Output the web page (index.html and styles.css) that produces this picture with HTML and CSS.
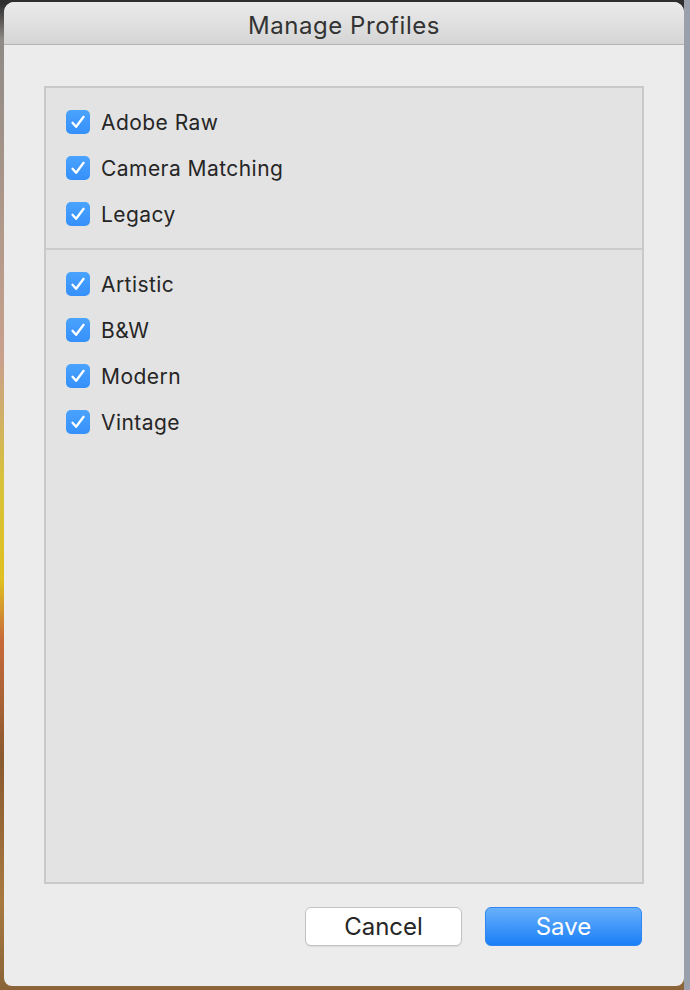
FILE: index.html
```html
<!DOCTYPE html>
<html>
<head>
<meta charset="utf-8">
<title>Manage Profiles</title>
<link rel="stylesheet" href="styles.css">
</head>
<body>
<div class="window">
  <div class="titlebar">Manage Profiles</div>
  <div class="content">
    <div class="panel">
      <div class="section">
        <label class="row"><span class="check"><svg viewBox="0 0 24 24"><path d="M6.5 12.8l3.6 4L17.6 6.8"/></svg></span><span class="label">Adobe Raw</span></label>
        <label class="row"><span class="check"><svg viewBox="0 0 24 24"><path d="M6.5 12.8l3.6 4L17.6 6.8"/></svg></span><span class="label">Camera Matching</span></label>
        <label class="row"><span class="check"><svg viewBox="0 0 24 24"><path d="M6.5 12.8l3.6 4L17.6 6.8"/></svg></span><span class="label">Legacy</span></label>
      </div>
      <div class="divider"></div>
      <div class="section">
        <label class="row"><span class="check"><svg viewBox="0 0 24 24"><path d="M6.5 12.8l3.6 4L17.6 6.8"/></svg></span><span class="label">Artistic</span></label>
        <label class="row"><span class="check"><svg viewBox="0 0 24 24"><path d="M6.5 12.8l3.6 4L17.6 6.8"/></svg></span><span class="label">B&amp;W</span></label>
        <label class="row"><span class="check"><svg viewBox="0 0 24 24"><path d="M6.5 12.8l3.6 4L17.6 6.8"/></svg></span><span class="label">Modern</span></label>
        <label class="row"><span class="check"><svg viewBox="0 0 24 24"><path d="M6.5 12.8l3.6 4L17.6 6.8"/></svg></span><span class="label">Vintage</span></label>
      </div>
    </div>
    <div class="buttons">
      <button class="btn btn-cancel">Cancel</button>
      <button class="btn btn-save">Save</button>
    </div>
  </div>
</div>
</body>
</html>
```
FILE: styles.css
```css
* { box-sizing: border-box; }
html, body { margin: 0; height: 100%; }
body {
  width: 690px;
  height: 990px;
  padding: 2px 6px 4px 4px;
  background:
    linear-gradient(to right, rgba(0,0,0,0) 0, rgba(0,0,0,0) 684px, #9aa0ab 684px),
    linear-gradient(to bottom, #2e2e2e 0, #2e2e2e 4px, #8f8a86 40px, #b49a8a 250px, #c9a08c 360px, #d8c23a 480px, #e0c020 580px, #c86a3a 640px, #8a5a30 760px, #a87a40 900px, #8a6438 990px);
  font-family: Inter, "Noto Sans", "Liberation Sans", sans-serif;
  overflow: hidden;
}
.window {
  width: 680px;
  height: 984px;
  background: #ececec;
  border-radius: 10px 10px 8px 8px;
  overflow: hidden;
  display: flex;
  flex-direction: column;
}
.titlebar {
  height: 43px;
  flex: none;
  background: linear-gradient(to bottom, #ebebeb, #d5d5d5);
  border-bottom: 1px solid #b4b4b4;
  text-align: center;
  font-size: 24px;
  line-height: 48px;
  color: #333333;
  letter-spacing: 0.55px;
}
.content {
  flex: 1;
  padding: 41px 40px 40px 40px;
  display: flex;
  flex-direction: column;
}
.panel {
  height: 798px;
  flex: none;
  background: #e3e3e3;
  border: 2px solid #c9c9c9;
}
.section {
  padding: 11px 0;
}
.divider {
  height: 2px;
  background: #cbcbcb;
}
.row {
  height: 46px;
  display: flex;
  align-items: center;
  padding-left: 20px;
}
.check {
  width: 24px;
  height: 24px;
  border-radius: 5px;
  background: linear-gradient(to bottom, #4aa3fd, #3590fb);
  flex: none;
  display: flex;
}
.check svg {
  width: 24px;
  height: 24px;
  fill: none;
  stroke: #ffffff;
  stroke-width: 2.3;
  stroke-linecap: round;
  stroke-linejoin: round;
}
.label {
  margin-left: 11px;
  font-size: 21px;
  letter-spacing: 0.45px;
  color: #262626;
}
.buttons {
  margin-top: 23px;
  margin-right: 2px;
  display: flex;
  justify-content: flex-end;
  gap: 23px;
}
.btn {
  width: 157px;
  height: 39px;
  border-radius: 6px;
  font-family: inherit;
  font-size: 24px;
  padding: 0;
  line-height: 37px;
}
.btn-cancel {
  background: #ffffff;
  border: 1px solid #c3c3c3;
  color: #262626;
  box-shadow: 0 1px 1px rgba(0,0,0,0.08);
}
.btn-save {
  background: linear-gradient(to bottom, #69b0fb, #1a7ff8);
  border: 1px solid #2f87f2;
  color: #ffffff;
}
```
